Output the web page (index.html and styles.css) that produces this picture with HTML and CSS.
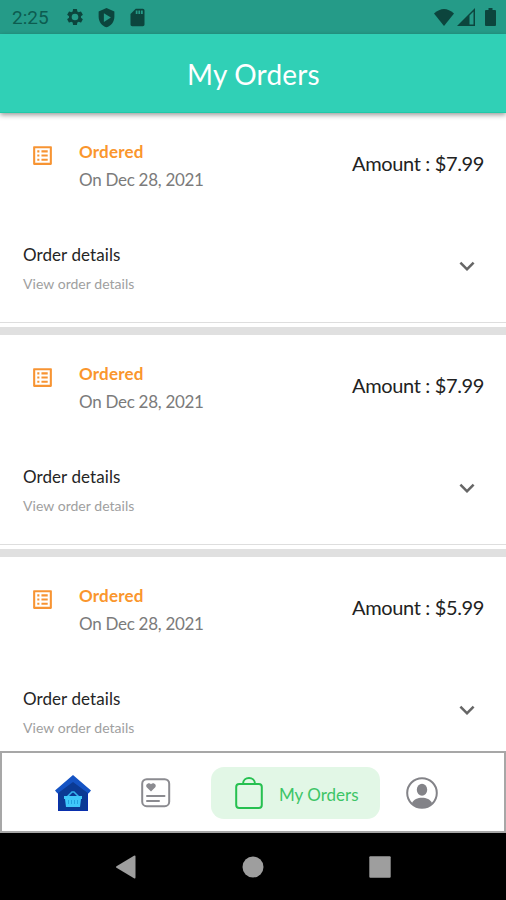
FILE: index.html
```html
<!DOCTYPE html>
<html lang="en">
<head>
<meta charset="utf-8">
<title>My Orders</title>
<link rel="stylesheet" href="styles.css">
</head>
<body>
<svg width="0" height="0" class="defs">
  <symbol id="list" viewBox="0 0 24 24"><path d="M19 5v14H5V5h14m1.100-2H3.900c-.5 0-.9.4-.9.9v16.200c0 .4.400.9.9.9h16.200c.4 0 .9-.5.9-.9V3.900c0-.5-.5-.9-.9-.9zM11 7h6v2h-6V7zm0 4h6v2h-6v-2zm0 4h6v2h-6zM7 7h2v2H7zm0 4h2v2H7zm0 4h2v2H7z"/></symbol>
  <symbol id="chevron" viewBox="0 0 24 24"><path d="M16.590 8.590 12 13.170 7.410 8.590 6 10l6 6 6-6z"/></symbol>
</svg>
<div class="screen">
  <header class="status">
    <span class="time">2:25</span>
    <svg class="gear" viewBox="0 0 24 24"><path fill-rule="evenodd" d="M19.140 12.940c.04-.3.060-.61.060-.94s-.02-.64-.07-.94l2.030-1.580a.5.500 0 0 0 .12-.61l-1.920-3.320a.49.490 0 0 0-.59-.22l-2.390.96c-.5-.38-1.030-.7-1.620-.94l-.36-2.540a.48.480 0 0 0-.48-.41h-3.840c-.24 0-.43.17-.47.41l-.36 2.540c-.59.240-1.130.570-1.620.94l-2.390-.96a.48.480 0 0 0-.59.220L2.740 8.870c-.12.210-.08.470.12.610l2.030 1.580c-.05.300-.09.630-.09.940s.02.640.07.940l-2.030 1.580a.5.500 0 0 0-.12.610l1.920 3.320c.12.220.370.290.590.220l2.390-.96c.5.380 1.030.7 1.620.94l.36 2.540c.05.240.240.410.480.410h3.840c.24 0 .44-.17.47-.41l.36-2.540c.59-.24 1.130-.56 1.620-.94l2.390.96c.22.080.470 0 .59-.22l1.920-3.320a.5.500 0 0 0-.12-.61zM12 16a4 4 0 1 1 0-8 4 4 0 0 1 0 8z"/></svg>
    <svg class="shield" viewBox="0 0 24 24"><path fill-rule="evenodd" d="M12 1 3 5v6c0 5.500 3.800 10.700 9 12 5.200-1.300 9-6.500 9-12V5zM9 7l8 5-8 5z"/></svg>
    <svg class="sd" viewBox="0 0 24 24"><path fill-rule="evenodd" d="M18 2h-8L4 8v12c0 1.100.9 2 2 2h12c1.100 0 2-.9 2-2V4c0-1.100-.9-2-2-2zM10 4h2v4h-2zm3 0h2v4h-2zm3 0h2v4h-2z"/></svg>
    <span class="grow"></span>
    <svg class="wifi" viewBox="0 0 20 17"><path d="M0 4.500Q10-4.500 20 4.500L10 17z"/></svg>
    <svg class="signal" viewBox="0 0 18 18"><path fill-rule="evenodd" d="M0 18 18 0v18zM12.500 7.500v9h4V3.500z"/></svg>
    <svg class="battery" viewBox="0 0 11 18"><path d="M3.500 0h4v2H10q1 0 1 1v14q0 1-1 1H1q-1 0-1-1V3q0-1 1-1h2.500z"/></svg>
  </header>
  <div class="appbar"><h1>My Orders</h1></div>
  <main class="orders">
    <article class="order">
      <div class="summary">
        <svg class="list"><use href="#list"/></svg>
        <div class="state"><div class="ordered">Ordered</div><div class="date">On Dec 28, 2021</div></div>
        <div class="amount">Amount : $7.99</div>
      </div>
      <div class="details">
        <div><div class="title">Order details</div><div class="sub">View order details</div></div>
        <svg class="chevron"><use href="#chevron"/></svg>
      </div>
    </article>
    <article class="order">
      <div class="summary">
        <svg class="list"><use href="#list"/></svg>
        <div class="state"><div class="ordered">Ordered</div><div class="date">On Dec 28, 2021</div></div>
        <div class="amount">Amount : $7.99</div>
      </div>
      <div class="details">
        <div><div class="title">Order details</div><div class="sub">View order details</div></div>
        <svg class="chevron"><use href="#chevron"/></svg>
      </div>
    </article>
    <article class="order">
      <div class="summary">
        <svg class="list"><use href="#list"/></svg>
        <div class="state"><div class="ordered">Ordered</div><div class="date">On Dec 28, 2021</div></div>
        <div class="amount">Amount : $5.99</div>
      </div>
      <div class="details">
        <div><div class="title">Order details</div><div class="sub">View order details</div></div>
        <svg class="chevron"><use href="#chevron"/></svg>
      </div>
    </article>
  </main>
  <nav class="tabs">
    <svg class="home" viewBox="0 0 36 36">
      <path fill="#0b3a94" d="M3 15 18 3l15 12v21H3z"/>
      <path fill="none" stroke="#0a2fae" d="M3.500 17v18.500h29V17"/>
      <path fill="#1453c4" d="M18 0 36 15.500 33.500 18.500 18 7 2.500 18.500 0 15.500z"/>
      <path fill="none" stroke="#35b5ee" stroke-width="1.500" d="m12 22 5-5h2l5 5"/>
      <path fill="#3fc8fa" d="M9 21h18v3h-1l-1 8H11l-1-8H9z"/>
      <path stroke="#1593d2" stroke-width=".7" d="M13.500 25v4m3-4v4m3-4v4m3-4v4"/>
    </svg>
    <svg class="wish" viewBox="0 0 30 30">
      <rect x="1.200" y="1.200" width="27" height="27" rx="4.500" fill="none" stroke="#8b8b90" stroke-width="2"/>
      <path fill="#8b8b90" d="M10 13.500 5.700 9.200C3.800 7 7.700 3.600 10 6.300c2.300-2.700 6.200.7 4.300 2.900z"/>
      <path stroke="#8b8b90" stroke-width="2" stroke-linecap="round" d="M6 18h17.500M6 23h12"/>
    </svg>
    <div class="active">
      <svg class="bag" viewBox="0 0 28 34"><g fill="none" stroke="#26c050" stroke-width="2"><rect x="1.200" y="8" width="25.600" height="24" rx="3"/><path d="M8 8c0-8 12-8 12 0"/></g></svg>
      <span>My Orders</span>
    </div>
    <svg class="user" viewBox="0 0 32 32"><circle cx="16" cy="16" r="14.800" fill="none" stroke="#838388" stroke-width="2"/><ellipse cx="16" cy="12.700" rx="5.200" ry="6" fill="#838388"/><path fill="#838388" d="M6 26c3-7 17-7 20 0-4 6-16 6-20 0z"/></svg>
  </nav>
  <footer class="system">
    <svg viewBox="0 0 24 24"><path d="M2.500 11.200 20 .8q1.500-.8 1.500 1v20.400q0 1.800-1.500 1L2.500 12.800q-1.300-.8 0-1.600z"/></svg>
    <svg viewBox="0 0 24 24"><circle cx="12" cy="12" r="10.500"/></svg>
    <svg viewBox="0 0 24 24"><rect x="1.300" y="1.300" width="21.400" height="21.400" rx="1"/></svg>
  </footer>
</div>
</body>
</html>
```

FILE: styles.css
```css
* { box-sizing: border-box; }
body { margin: 0; font-family: Lato, sans-serif; background: #fff; }
svg { display: block; flex: none; }
.defs { position: absolute; }
.screen { width: 506px; height: 900px; display: flex; flex-direction: column; overflow: hidden; }
.status { height: 34px; flex: none; display: flex; align-items: center; padding: 0 10px 0 12px; background: #259b88; color: #0d5c50; fill: #0c453d; }
.time { font: 19px/34px Roboto, sans-serif; width: 39px; margin-right: 14px; padding-top: 2px; }
.gear { width: 20px; height: 20px; margin-right: 11px; }
.shield { width: 21px; height: 21px; margin-right: 10px; }
.sd { width: 21px; height: 21px; }
.grow { flex: 1; }
.wifi { width: 20px; height: 17px; margin-right: 3px; }
.signal { width: 18px; height: 18px; margin-right: 10px; }
.battery { width: 11px; height: 18px; }
.appbar { height: 79px; flex: none; display: flex; justify-content: center; background: #30d0b6; border-bottom: 1px solid #20c9a8; box-shadow: 0 2px 5px rgba(0,0,0,.4); z-index: 1; }
h1 { margin: 0; padding-left: 1px; font-weight: 400; font-size: 28px; letter-spacing: .2px; line-height: 81px; color: #fff; }
.orders { flex: 1; min-height: 0; overflow: hidden; }
.order { height: 222px; border-bottom: 8px solid #e0e0e0; padding-bottom: 4px; }
.summary { height: 112px; padding: 25px 22px 0 30px; display: flex; align-items: flex-start; }
.list { width: 25px; height: 25px; fill: #f79433; margin: 5px 24px 0 0; }
.state { flex: 1; font-size: 17px; line-height: 28px; }
.ordered { color: #fa962d; font-weight: 700; letter-spacing: .2px; }
.date { color: #7b7b7b; letter-spacing: -.28px; }
.amount { font-size: 20px; line-height: 51px; color: #222; letter-spacing: -.36px; }
.details { height: 98px; border-bottom: 1px solid #dedede; padding: 15px 24px 0 23px; display: flex; justify-content: space-between; }
.title { font-size: 17px; line-height: 29px; color: #252525; letter-spacing: .08px; }
.sub { font-size: 14px; line-height: 29px; color: #a0a0a0; letter-spacing: .04px; }
.chevron { width: 30px; height: 30px; fill: #666; margin-top: 11px; }
.tabs { height: 82px; flex: none; border: 2px solid #a7a7a7; background: #fff; display: flex; align-items: center; padding: 2px 0 0 53px; }
.home { width: 36px; height: 36px; margin-right: 50px; }
.wish { width: 30px; height: 30px; margin-right: 40px; }
.active { width: 169px; height: 52px; border-radius: 13px; background: #e2f7e6; display: flex; align-items: center; padding-left: 24px; margin-right: 26px; color: #3dc566; font-size: 17px; }
.active span { padding-top: 2px; }
.bag { width: 28px; height: 34px; margin-right: 16px; }
.user { width: 32px; height: 32px; }
.system { height: 67px; flex: none; background: #000; display: flex; gap: 103px; align-items: center; padding-left: 114px; fill: #9e9e9e; }
.system svg { width: 24px; height: 24px; }
```
